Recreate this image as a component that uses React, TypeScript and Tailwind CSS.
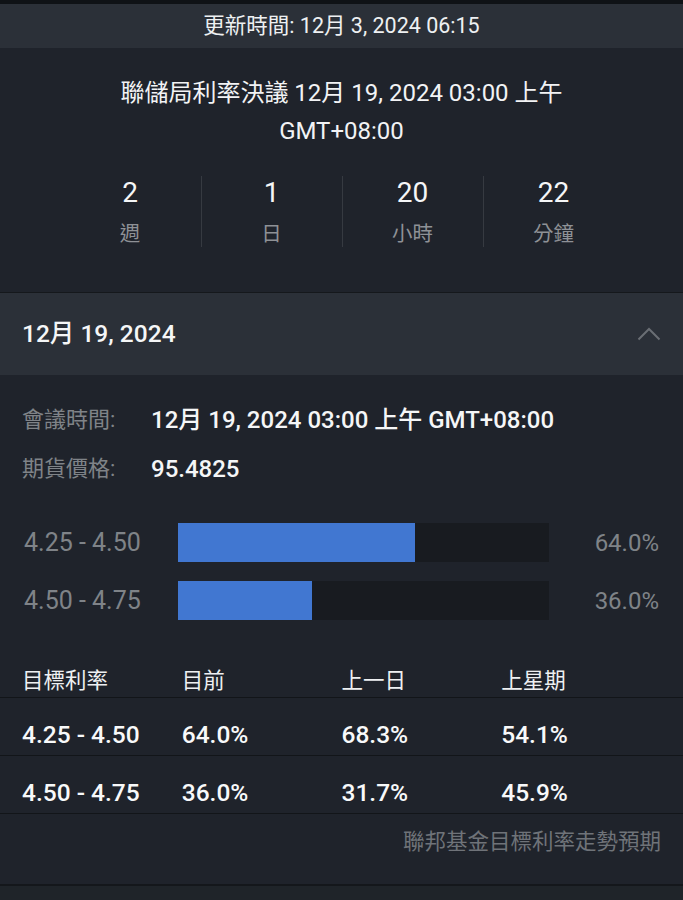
import React from "react";

const font = { fontFamily: 'Roboto, "Noto Sans CJK TC", "Noto Sans CJK SC", sans-serif' };

const countdown = [
  { value: "2", label: "週" },
  { value: "1", label: "日" },
  { value: "20", label: "小時" },
  { value: "22", label: "分鐘" },
];

const bars = [
  { range: "4.25 - 4.50", pct: 64.0 },
  { range: "4.50 - 4.75", pct: 36.0 },
];

const rows = [
  ["4.25 - 4.50", "64.0%", "68.3%", "54.1%"],
  ["4.50 - 4.75", "36.0%", "31.7%", "45.9%"],
];

export default function App() {
  return (
    <div className="w-[683px] h-[900px] overflow-hidden bg-[#1f232b] text-white" style={font}>
      <div className="h-[4px] bg-[#0f1216]" />
      <div className="h-[44px] bg-[#2b3038] flex items-center justify-center text-[21.5px] text-[#eef0f2]">
        更新時間: 12月 3, 2024 06:15
      </div>

      <div className="pt-[26px] text-center text-[24px] leading-[38px] text-[#f2f3f5]">
        <div>聯儲局利率決議 12月 19, 2024 03:00 上午</div>
        <div>GMT+08:00</div>
      </div>

      <div className="mt-[26px] flex justify-center pb-[45px]">
        {countdown.map((c, i) => (
          <div
            key={c.label}
            className={`w-[141px] flex flex-col items-center ${i > 0 ? "border-l border-[#363a41]" : ""}`}
          >
            <div className="text-[28px] leading-[34px] text-[#f5f6f7]">{c.value}</div>
            <div className="mt-[11px] text-[20.5px] leading-[26px] text-[#8e9196]">{c.label}</div>
          </div>
        ))}
      </div>

      <div className="border-t border-[#15181c] h-[83px] bg-[#2b3038] flex items-center justify-between pl-[22px] pr-[22px]">
        <span className="text-[24.5px] font-medium text-[#f5f6f7]">12月 19, 2024</span>
        <svg width="24" height="14" viewBox="0 0 24 14" fill="none">
          <path d="M1.5 12.5 L12 2 L22.5 12.5" stroke="#6a6e74" strokeWidth="2" />
        </svg>
      </div>

      <div className="pt-[30px] px-[22px] leading-[30px]">
        <div className="flex items-center">
          <span className="w-[129px] text-[22px] text-[#7f8388]">會議時間:</span>
          <span className="text-[24px] font-medium text-[#f5f6f7]">12月 19, 2024 03:00 上午 GMT+08:00</span>
        </div>
        <div className="flex items-center mt-[19px]">
          <span className="w-[129px] text-[22px] text-[#7f8388]">期貨價格:</span>
          <span className="text-[24px] font-medium text-[#f5f6f7]">95.4825</span>
        </div>
      </div>

      <div className="mt-[39px] flex flex-col gap-[19px] pl-[24px] pr-[24px]">
        {bars.map((b) => (
          <div key={b.range} className="flex items-center h-[39px]">
            <span className="w-[154px] text-[25px] text-[#7f8388]">{b.range}</span>
            <div className="w-[371px] h-[39px] bg-[#181b20]">
              <div className="h-full bg-[#4177d1]" style={{ width: `${b.pct}%` }} />
            </div>
            <span className="flex-1 text-right text-[24px] text-[#7f8388]">{b.pct.toFixed(1)}%</span>
          </div>
        ))}
      </div>

      <div className="mt-[20px]">
        <div className="h-[58px] flex items-end pb-[2px] px-[22px] border-b border-[#121519] text-[21.5px] leading-[28px] text-[#eef0f2]">
          <span className="w-[161px]">目標利率</span>
          <span className="w-[161px]">目前</span>
          <span className="w-[161px]">上一日</span>
          <span className="w-[161px]">上星期</span>
        </div>
        {rows.map((r) => (
          <div
            key={r[0]}
            className="h-[58px] flex items-center pt-[18px] px-[22px] border-b border-[#121519] text-[24.5px] font-medium text-[#f8f9fa]"
          >
            {r.map((cell, j) => (
              <span key={j} className="w-[161px]">{cell}</span>
            ))}
          </div>
        ))}
        <div className="h-[72px] border-b-2 border-[#14171b] flex justify-end pr-[22px] pt-[12px] text-[21.5px] text-[#6f7379]">
          聯邦基金目標利率走勢預期
        </div>
        <div className="h-[20px] bg-[#1f2429]" />
      </div>
    </div>
  );
}
